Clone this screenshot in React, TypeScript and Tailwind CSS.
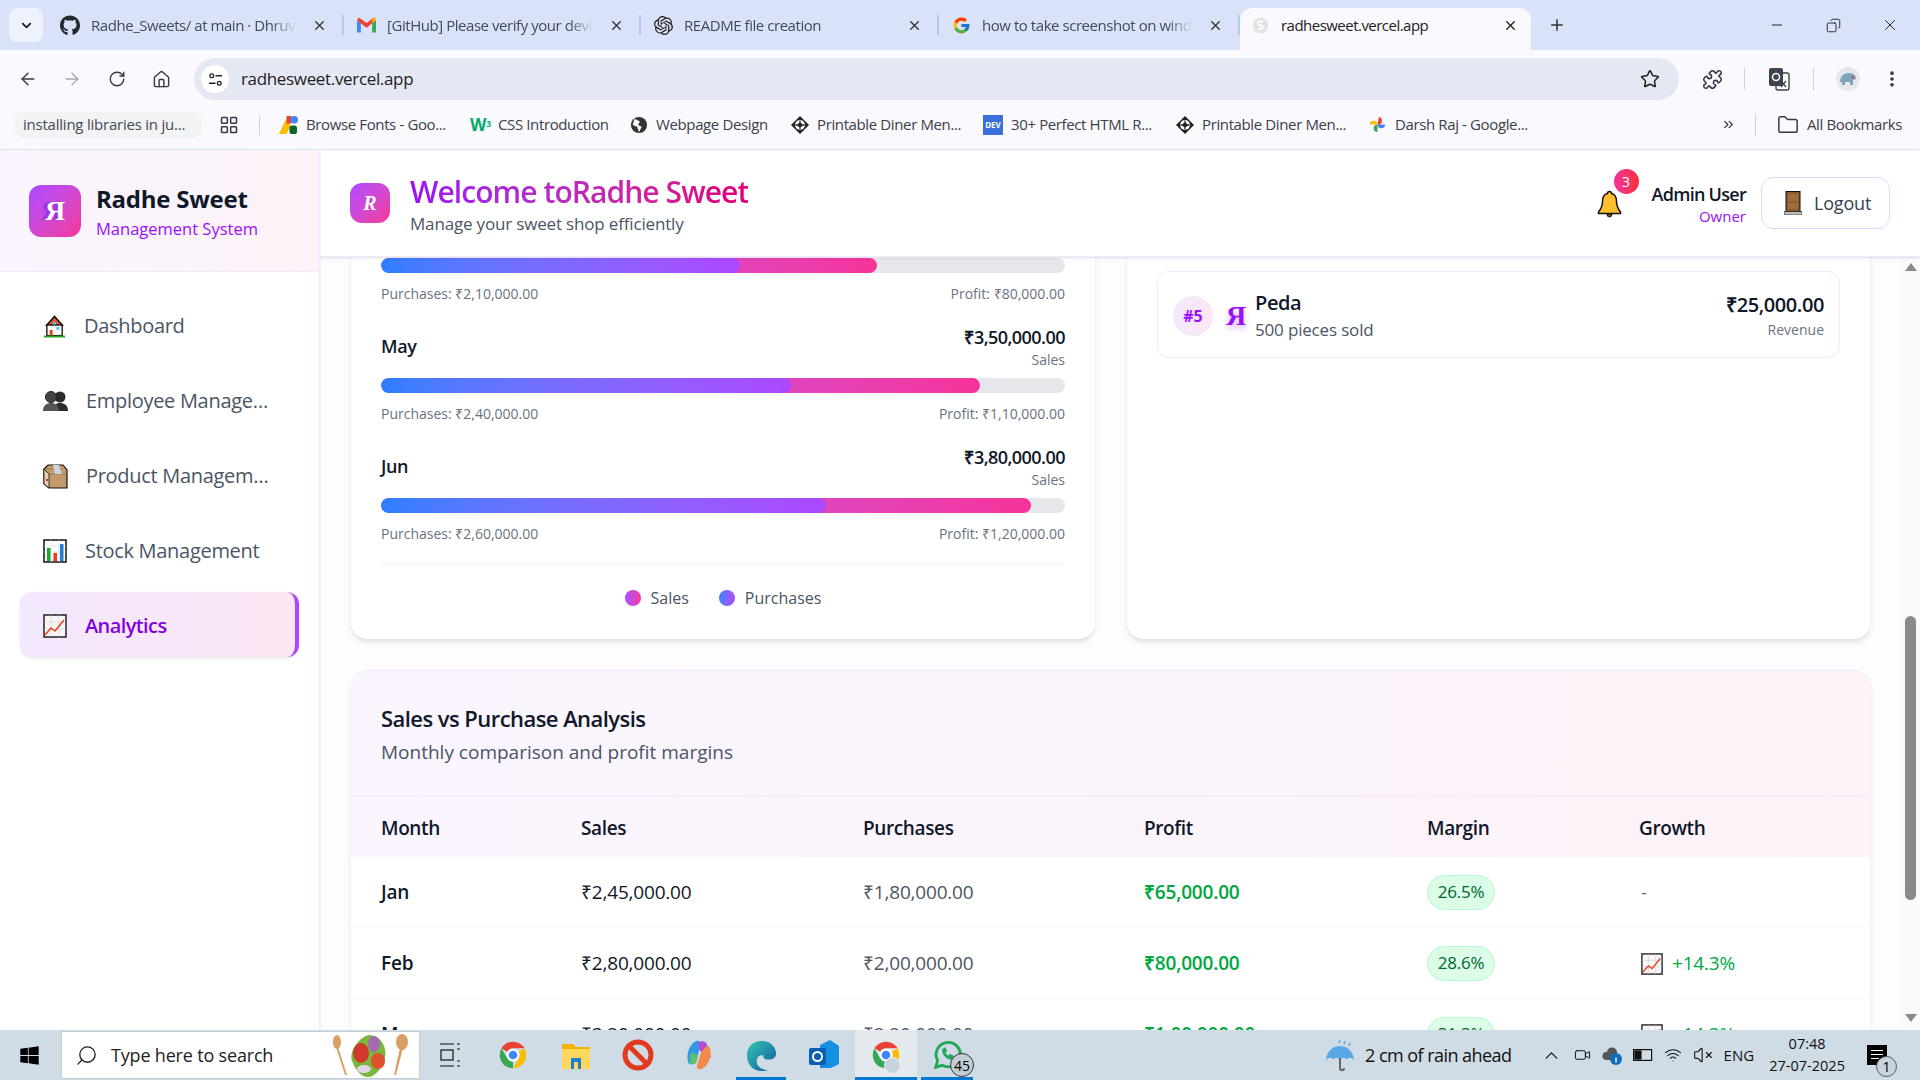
import { ArrowLeft, ArrowRight, RotateCw, House, Star, Puzzle, EllipsisVertical, Folder, LayoutGrid, ChevronDown, ChevronUp, X, Plus, Minus, Copy, Search, ChevronsRight, Video, VolumeX, Wifi } from "lucide-react"
import { FaGithub, FaWindows } from "react-icons/fa"
import { SiOpenai } from "react-icons/si"
import { FcGoogle } from "react-icons/fc"

const HomeEmoji = () => (
  <svg viewBox="0 0 24 24" className="w-[23px] h-[24px] shrink-0">
    <path d="M3 12 12 2l9 10" fill="#e8532b" stroke="#111" strokeWidth="1.6" />
    <rect x="4" y="11" width="16" height="11" fill="#fff" stroke="#111" strokeWidth="1.4" />
    <rect x="7" y="16" width="3" height="6" fill="#e8401c" />
    <rect x="14" y="13" width="3" height="3" fill="#4fc3f7" />
    <rect x="10.5" y="7.5" width="3" height="3" fill="#4fc3f7" />
    <rect x="1" y="22" width="22" height="2" fill="#26a326" />
  </svg>
)

const BustsEmoji = () => (
  <svg viewBox="0 0 25 20" className="w-[25px] h-[20px] shrink-0">
    <circle cx="17" cy="6" r="5.5" fill="#2b2b2b" />
    <path d="M10 20c0-6 3-8 7-8s8 2 8 8z" fill="#2b2b2b" />
    <circle cx="8" cy="6" r="5.5" fill="#444" stroke="#222" />
    <path d="M0 20c0-6 4-8 8-8s8 2 8 8z" fill="#555" />
  </svg>
)

const BoxEmoji = () => (
  <svg viewBox="0 0 25 25" className="w-[25px] h-[25px] shrink-0">
    <path d="M1 5 5 1h15l4 5v18H6l-5-4z" fill="#c39a6b" stroke="#111" strokeWidth="1.2" />
    <path d="M1 5l5 5v14l-5-4z" fill="#e8cfae" stroke="#111" strokeWidth="0.8" />
    <path d="M6 10h18M1 5h18" stroke="#8a6a44" strokeWidth="0.6" />
    <path d="M10 1h6l3 9h-7z" fill="#cbd5de" />
    <rect x="3" y="15" width="2" height="2" fill="#d8263c" />
  </svg>
)

const BarsEmoji = () => (
  <svg viewBox="0 0 24 24" className="w-[24px] h-[24px] shrink-0">
    <rect x="1" y="1" width="22" height="22" fill="#fafafa" stroke="#111" strokeWidth="1.5" />
    <path d="M1 7h22M1 13h22M8 1v22M16 1v22" stroke="#ddd" strokeWidth="0.6" />
    <rect x="4" y="9" width="3.5" height="13" fill="#1fa82e" />
    <rect x="10.5" y="14" width="3.5" height="8" fill="#e83a1f" />
    <rect x="17" y="5" width="3.5" height="17" fill="#1f7fd8" />
  </svg>
)

const ChartUpEmoji = ({ className = "w-[24px] h-[24px]" }: { className?: string }) => (
  <svg viewBox="0 0 24 24" className={className + " shrink-0"}>
    <rect x="1" y="1" width="22" height="22" fill="#f7f7f7" stroke="#222" strokeWidth="1.5" />
    <path d="M1 8h22M1 15h22M8 1v22M16 1v22" stroke="#ccc" strokeWidth="0.6" />
    <path d="M2 21l6-7 4 3 9-11" fill="none" stroke="#e8401c" strokeWidth="1.5" />
  </svg>
)

const BellEmoji = () => (
  <svg viewBox="0 0 25 28" className="w-[25px] h-[28px]">
    <path d="M12.500 1.500c1.500 0 2 1 2 2 4 1 5 4 5 8 0 5 2 8 4 10.500v1.500H1.500V22c2-2.500 4-5.500 4-10.500 0-4 1-7 5-8 0-1 .5-2 2-2z" fill="#fdbf2d" stroke="#111" strokeWidth="1.500" />
    <path d="M10 24a2.500 3 0 0 0 5 0z" fill="#7a5a10" stroke="#111" strokeWidth="1" />
  </svg>
)

const DoorEmoji = () => (
  <svg viewBox="0 0 18 24" className="w-[18px] h-[24px] shrink-0">
    <rect x="2" y="0.500" width="14" height="20" fill="#8a5a32" stroke="#111" />
    <rect x="4" y="3" width="10" height="7" fill="#a06c3e" />
    <rect x="4" y="12" width="10" height="6" fill="#a06c3e" />
    <rect x="0" y="20.500" width="18" height="3.500" fill="#bbb" stroke="#111" strokeWidth="0.600" />
  </svg>
)

const ChromeLogo = ({ className }: { className: string }) => (
  <svg viewBox="0 0 48 48" className={className}>
    <path d="M24 4a20 20 0 0 1 17.320 10H24a10 10 0 0 0-8.660 5L6.680 14A20 20 0 0 1 24 4z" fill="#ea4335" />
    <path d="M41.320 14A20 20 0 0 1 24 44l8.660-15A10 10 0 0 0 32.660 19z" fill="#fbbc04" />
    <path d="M6.680 14l8.660 15A10 10 0 0 0 24 34l-0 10A20 20 0 0 1 6.680 14z" fill="#34a853" />
    <circle cx="24" cy="24" r="8" fill="#4285f4" stroke="#fff" strokeWidth="3" />
  </svg>
)

const GmailIcon = () => (
  <svg viewBox="0 0 20 16" className="w-[19px] h-[16px]">
    <path d="M0 3v13h4V6z" fill="#4285f4" />
    <path d="M20 3v13h-4V6z" fill="#34a853" />
    <path d="M0 3l10 8 10-8-2-3-8 6-8-6z" fill="#ea4335" />
    <path d="M16 3l2-3c1-.3 2 .8 2 3l-4 3z" fill="#fbbc04" />
  </svg>
)

const DinerIcon = () => (
  <svg viewBox="0 0 20 20" className="w-[18px] h-[18px] shrink-0">
    <path d="M10 0l10 10-10 10L0 10z" fill="#222" />
    <circle cx="10" cy="10" r="5.500" fill="#fff" />
    <path d="M10 5v10M5 10h10" stroke="#222" strokeWidth="1.500" />
    <circle cx="10" cy="10" r="2.500" fill="#222" />
  </svg>
)

const PinwheelIcon = () => (
  <svg viewBox="0 0 20 20" className="w-[19px] h-[19px] shrink-0">
    <path d="M10 10V2a4 4 0 0 1 0 8z" fill="#ea4335" transform="rotate(10 10 10)" />
    <path d="M10 10h8a4 4 0 0 1-8 0z" fill="#4285f4" />
    <path d="M10 10v8a4 4 0 0 1 0-8z" fill="#34a853" />
    <path d="M10 10H2a4 4 0 0 1 8 0z" fill="#fbbc04" />
  </svg>
)

const FontsIcon = () => (
  <svg viewBox="0 0 20 20" className="w-[19px] h-[19px] shrink-0">
    <path d="M0 20 8 3l4 8-4 9z" fill="#fbbc04" />
    <rect x="8" y="1" width="5" height="8" fill="#ea4335" />
    <circle cx="16" cy="5" r="4" fill="#4285f4" />
    <rect x="11" y="11" width="8" height="9" rx="3" fill="#0d652d" />
  </svg>
)

const bookmarks = [
  { icon: <FontsIcon />, label: "Browse Fonts - Goo...", w: "w-[191px]" },
  { icon: <span className="w-[20px] text-[17px] font-bold text-[#04aa6d] leading-none shrink-0">W<sup className="text-[8px]">3</sup></span>, label: "CSS Introduction", w: "w-[160px]" },
  { icon: <svg viewBox="0 0 20 20" className="w-[18px] h-[18px] shrink-0"><circle cx="10" cy="10" r="9" fill="#333" /><path d="M5 3l6 3-2 4 4 2-3 6-2-6-5-2z" fill="#f9f9fe" /></svg>, label: "Webpage Design", w: "w-[161px]" },
  { icon: <DinerIcon />, label: "Printable Diner Men...", w: "w-[192px]" },
  { icon: <span className="w-[20px] h-[20px] bg-[#3b6fdc] text-white text-[8px] font-bold flex items-center justify-center shrink-0">DEV</span>, label: "30+ Perfect HTML R...", w: "w-[193px]" },
  { icon: <DinerIcon />, label: "Printable Diner Men...", w: "w-[192px]" },
  { icon: <PinwheelIcon />, label: "Darsh Raj - Google...", w: "w-[190px]" },
]

const tabs = [
  { icon: <FaGithub className="w-[21px] h-[21px] text-[#24292f]" />, label: "Radhe_Sweets/ at main · Dhruvi", w: "w-[296px]" },
  { icon: <GmailIcon />, label: "[GitHub] Please verify your device", w: "w-[297px]" },
  { icon: <SiOpenai className="w-[19px] h-[19px] text-[#222]" />, label: "README file creation", w: "w-[298px]" },
  { icon: <FcGoogle className="w-[19px] h-[19px]" />, label: "how to take screenshot on windows", w: "w-[301px]" },
]

function TabStrip() {
  return (
    <div className="h-[50px] bg-[#d9e2f9] flex items-end shrink-0">
      <div className="self-start mt-[8px] ml-[9px] mr-[5px] w-[34px] h-[34px] bg-[#eef2fd] rounded-lg flex items-center justify-center">
        <ChevronDown className="w-[15px] h-[15px] text-[#222]" strokeWidth={3} />
      </div>
      {tabs.map((tab) => (
        <div key={tab.label} className={tab.w + " h-[50px] flex items-center relative pl-[12px] pr-[48px] gap-[11px] shrink-0"}>
          <span className="shrink-0 w-[20px] flex justify-center">{tab.icon}</span>
          <span className="flex-1 min-w-0 text-[15px] tracking-[-0.03em] text-[#444a55] whitespace-nowrap overflow-hidden [mask-image:linear-gradient(to_right,black_88%,transparent)]">{tab.label}</span>
          <X className="absolute right-[17px] top-[18px] w-[15px] h-[15px] text-[#333]" strokeWidth={2.2} />
          <span className="absolute right-0 top-[15px] h-[20px] w-[2px] bg-[#b4c7ee]"></span>
        </div>
      ))}
      <div className="w-[291px] h-[42px] bg-[#f9f9fe] rounded-t-xl flex items-center relative pl-[12px] pb-[8px] gap-[12px] shrink-0">
        <svg viewBox="0 0 20 20" className="w-[17px] h-[17px] shrink-0">
          <circle cx="10" cy="10" r="9" fill="#e2e2e4" />
          <path d="M13 6c-2-2-6-1-6 1 0 3 6 2 6 5 0 2-4 3-6 1" fill="none" stroke="#fff" strokeWidth="2" />
        </svg>
        <span className="text-[15px] tracking-[-0.035em] text-[#222]">radhesweet.vercel.app</span>
        <X className="absolute right-[13px] top-[10px] w-[15px] h-[15px] text-[#222]" strokeWidth={2.2} />
      </div>
      <div className="h-[50px] flex items-center ml-[17px] flex-1">
        <Plus className="w-[18px] h-[18px] text-[#333]" strokeWidth={2} />
        <Minus className="ml-[203px] w-[16px] h-[16px] text-[#222]" strokeWidth={1.5} />
        <Copy className="ml-[41px] w-[15px] h-[15px] text-[#222] -scale-x-100" strokeWidth={1.5} />
        <X className="ml-[40px] w-[18px] h-[18px] text-[#222]" strokeWidth={1.3} />
      </div>
    </div>
  )
}

function Toolbar() {
  return (
    <div className="h-[58px] bg-[#f9f9fe] flex items-center shrink-0">
      <ArrowLeft className="ml-[18px] w-[20px] h-[20px] text-[#333a45]" strokeWidth={1.7} />
      <ArrowRight className="ml-[24px] w-[20px] h-[20px] text-[#a5a9b2]" strokeWidth={1.7} />
      <RotateCw className="ml-[26px] w-[18px] h-[18px] text-[#333a45]" strokeWidth={1.8} />
      <House className="ml-[26px] w-[19px] h-[19px] text-[#333a45]" strokeWidth={1.8} />
      <div className="ml-[23px] w-[1485px] h-[42px] rounded-full bg-[#e4e8f3] flex items-center pl-[7px] pr-[19px]">
        <span className="w-[28px] h-[28px] rounded-full bg-white flex items-center justify-center">
          <svg viewBox="0 0 16 16" className="w-[15px] h-[15px]" fill="none" stroke="#222" strokeWidth="1.4">
            <circle cx="4" cy="4" r="2" /><path d="M8 4h7M1 12h7" /><circle cx="12" cy="12" r="2" />
          </svg>
        </span>
        <span className="ml-[12px] text-[17px] tracking-[-0.02em] text-[#1f2024] flex-1">radhesweet.vercel.app</span>
        <Star className="w-[20px] h-[20px] text-[#222]" strokeWidth={1.8} />
      </div>
      <Puzzle className="ml-[23px] w-[21px] h-[21px] text-[#333a45]" strokeWidth={1.8} />
      <span className="ml-[21px] w-[1px] h-[22px] bg-[#c6d5ef]"></span>
      <svg viewBox="0 0 22 24" className="ml-[23px] w-[22px] h-[24px]">
        <rect x="8" y="6" width="13" height="17" rx="2" fill="#fff" stroke="#3c4450" strokeWidth="1.400" />
        <rect x="1" y="1" width="14" height="18" rx="2" fill="#3c4450" />
        <circle cx="8" cy="10" r="3.500" fill="none" stroke="#fff" strokeWidth="1.500" />
        <path d="M13 14l5 6M18 14l-5 6" stroke="#3c4450" strokeWidth="1.300" />
      </svg>
      <span className="ml-[23px] w-[1px] h-[22px] bg-[#c6d5ef]"></span>
      <svg viewBox="0 0 24 24" className="ml-[22px] w-[24px] h-[24px]">
        <circle cx="12" cy="12" r="12" fill="#e6e8ec" />
        <path d="M4 15c0-6 4-9 9-9 5 0 7 3 7 6l-3 1v5h-3v-3H9v3H6v-3z" fill="#7fa6b8" />
        <circle cx="17" cy="10" r="1.500" fill="#c0527a" />
      </svg>
      <EllipsisVertical className="ml-[22px] w-[20px] h-[20px] text-[#333a45]" strokeWidth={2.4} />
    </div>
  )
}

function BookmarksBar() {
  return (
    <div className="h-[42px] bg-[#f9f9fe] flex items-center shrink-0 border-b border-[#e3e5f0] pb-[8px]">
      <span className="ml-[15px] w-[187px] h-[26px] rounded-lg bg-[#f1f3f4] text-[15px] tracking-[-0.015em] text-[#444a55] pl-[8px] flex items-center whitespace-nowrap">installing libraries in ju...</span>
      <LayoutGrid className="ml-[17px] w-[20px] h-[20px] text-[#333a45]" strokeWidth={1.8} />
      <span className="ml-[20px] mr-[19px] w-[1px] h-[20px] bg-[#c6d5ef]"></span>
      {bookmarks.map((b, i) => (
        <div key={i} className={b.w + " flex items-center gap-[8px] shrink-0"}>
          {b.icon}
          <span className="text-[15px] tracking-[-0.025em] text-[#3c4048] whitespace-nowrap">{b.label}</span>
        </div>
      ))}
      <ChevronsRight className="ml-[163px] w-[15px] h-[15px] text-[#333a45]" strokeWidth={2} />
      <span className="ml-[19px] w-[1px] h-[22px] bg-[#c6d5ef]"></span>
      <Folder className="ml-[21px] w-[22px] h-[22px] text-[#333a45]" strokeWidth={1.6} />
      <span className="ml-[8px] text-[15px] tracking-[-0.025em] text-[#3c4048] whitespace-nowrap">All Bookmarks</span>
    </div>
  )
}

const navItems = [
  { icon: <HomeEmoji />, label: "Dashboard" },
  { icon: <BustsEmoji />, label: "Employee Management" },
  { icon: <BoxEmoji />, label: "Product Management" },
  { icon: <BarsEmoji />, label: "Stock Management" },
]

function Sidebar() {
  return (
    <div className="w-[320px] shrink-0 bg-white border-r border-[#f3e8ff] shadow-sm flex flex-col z-20">
      <div className="h-[122px] bg-gradient-to-r from-purple-50 to-pink-50 border-b border-[#f3e8ff] flex items-center pl-[29px] gap-[15px]">
        <div className="w-[52px] h-[52px] rounded-xl bg-gradient-to-br from-purple-500 to-pink-500 flex items-center justify-center text-white text-[28px] font-bold font-['Liberation_Serif',serif] [text-shadow:-4px_0_2px_#9333ea]">Я</div>
        <div className="pt-[4px]">
          <div className="text-[24px] leading-[30px] font-bold tracking-[-0.01em] text-gray-900">Radhe Sweet</div>
          <div className="text-[16.500px] leading-[24px] text-purple-600 mt-[3px]">Management System</div>
        </div>
      </div>
      <nav className="px-[20px] pt-[22px] flex flex-col gap-[11px]">
        {navItems.map((item) => (
          <div key={item.label} className="h-[64px] pl-[23px] flex items-center gap-[18px] text-[20px] tracking-[-0.015em] font-medium text-gray-600">
            {item.icon}
            <span className="w-[186px] truncate">{item.label}</span>
          </div>
        ))}
        <div className="h-[65px] -mt-[2px] pt-[2px] w-[279px] pl-[23px] flex items-center gap-[18px] text-[20px] tracking-[-0.03em] font-semibold text-purple-700 rounded-xl bg-gradient-to-r from-purple-100 to-pink-100 border-r-4 border-purple-500 shadow-sm">
          <ChartUpEmoji />
          <span>Analytics</span>
        </div>
      </nav>
    </div>
  )
}

function TopHeader() {
  return (
    <div className="h-[107px] shrink-0 bg-white border-b border-[#f3e8ff] shadow-sm flex items-center pl-[30px] z-10">
      <div className="w-[40px] h-[40px] rounded-xl bg-gradient-to-br from-purple-500 to-pink-500 flex items-center justify-center text-white text-[20px] font-bold italic font-['Liberation_Serif',serif]">R</div>
      <div className="ml-[20px] pt-[5px]">
        <div className="text-[30px] leading-[36px] font-semibold tracking-[-0.031em] bg-gradient-to-r from-purple-600 to-pink-600 bg-clip-text text-transparent w-fit">Welcome toRadhe Sweet</div>
        <div className="text-[17px] leading-[26px] tracking-[-0.01em] text-gray-600 mt-[1px]">Manage your sweet shop efficiently</div>
      </div>
      <div className="ml-auto flex items-center pr-[30px]">
        <div className="relative mr-[30px] mt-[2px]">
          <BellEmoji />
          <span className="absolute -top-[21px] left-[17px] w-[25px] h-[25px] rounded-full bg-gradient-to-r from-pink-500 to-red-500 text-white text-[14px] flex items-center justify-center">3</span>
        </div>
        <div className="text-right mr-[15px]">
          <div className="text-[18px] leading-[26px] font-semibold tracking-[-0.04em] text-gray-900 mt-[1px]">Admin User</div>
          <div className="text-[15px] leading-[20px] text-purple-600 -mt-[1px]">Owner</div>
        </div>
        <div className="w-[129px] h-[52px] rounded-xl border border-purple-200 flex items-center pl-[22px] gap-[12px] text-[18px] tracking-[-0.01em] text-gray-700">
          <DoorEmoji />
          Logout
        </div>
      </div>
    </div>
  )
}

const months = [
  { name: "Apr", sales: 290000, purchases: 210000, sold: "₹2,90,000.00", bought: "₹2,10,000.00", profit: "₹80,000.00" },
  { name: "May", sales: 350000, purchases: 240000, sold: "₹3,50,000.00", bought: "₹2,40,000.00", profit: "₹1,10,000.00" },
  { name: "Jun", sales: 380000, purchases: 260000, sold: "₹3,80,000.00", bought: "₹2,60,000.00", profit: "₹1,20,000.00" },
]

function MonthRow({ m }: { m: (typeof months)[number] }) {
  return (
    <div>
      <div className="h-[53px] pb-[10px] flex items-center justify-between">
        <span className="text-[18px] font-semibold tracking-[-0.02em] text-gray-900">{m.name}</span>
        <div className="text-right -mt-[1px]">
          <div className="text-[18px] leading-[26px] font-semibold tracking-[-0.03em] text-gray-900">{m.sold}</div>
          <div className="text-[14px] leading-[19px] text-gray-500">Sales</div>
        </div>
      </div>
      <div className="h-[15px] rounded-full bg-gray-200 relative overflow-hidden">
        <div className="absolute inset-y-0 left-0 rounded-full bg-gradient-to-r from-purple-500 to-pink-500" style={{ width: `${(m.sales / 400000) * 100}%` }}></div>
        <div className="absolute inset-y-0 left-0 rounded-full bg-gradient-to-r from-blue-500 to-purple-500" style={{ width: `${(m.purchases / 400000) * 100}%` }}></div>
      </div>
      <div className="mt-[9px] mb-[1px] h-[22px] flex justify-between items-center text-[14px] text-gray-500">
        <span>Purchases: {m.bought}</span>
        <span>Profit: {m.profit}</span>
      </div>
    </div>
  )
}

const tableRows = [
  { month: "Jan", sales: "₹2,45,000.00", purchases: "₹1,80,000.00", profit: "₹65,000.00", margin: "26.5%", growth: "" },
  { month: "Feb", sales: "₹2,80,000.00", purchases: "₹2,00,000.00", profit: "₹80,000.00", margin: "28.6%", growth: "+14.3%" },
  { month: "Mar", sales: "₹3,20,000.00", purchases: "₹2,20,000.00", profit: "₹1,00,000.00", margin: "31.3%", growth: "+14.3%" },
]

const gridCols = "grid grid-cols-[200px_282px_281px_283px_212px_261px]"

function AnalysisTable() {
  return (
    <div className="mt-[31px] bg-white rounded-t-2xl shadow-md border-t border-[#f3e8ff] overflow-hidden">
      <div className="bg-gradient-to-r from-purple-50 to-pink-50">
        <div className="h-[126px] pl-[30px] pt-[31px] border-b border-[#f3e8ff]">
          <div className="text-[22px] leading-[32px] font-semibold tracking-[-0.025em] text-gray-900">Sales vs Purchase Analysis</div>
          <div className="text-[19px] leading-[28px] text-gray-600 mt-[4px]">Monthly comparison and profit margins</div>
        </div>
        <div className={gridCols + " h-[60px] items-center text-[19px] font-semibold tracking-[-0.02em] text-gray-900"}>
          {["Month", "Sales", "Purchases", "Profit", "Margin", "Growth"].map((h) => (
            <div key={h} className="pl-[30px] pt-[2px]">{h}</div>
          ))}
        </div>
      </div>
      {tableRows.map((r) => (
        <div key={r.month} className={gridCols + " h-[71px] items-center text-[19px] tracking-[-0.01em] border-b border-[#faf5ff]"}>
          <div className="pl-[30px] pt-[1px] font-semibold text-gray-900">{r.month}</div>
          <div className="pl-[30px] pt-[1px] text-gray-900">{r.sales}</div>
          <div className="pl-[30px] pt-[1px] text-gray-600">{r.purchases}</div>
          <div className="pl-[30px] pt-[1px] font-semibold text-green-600">{r.profit}</div>
          <div className="pl-[30px]">
            <span className="inline-flex w-[68px] h-[35px] items-center justify-center rounded-full bg-green-100 border border-green-200 text-green-800 text-[17px]">{r.margin}</span>
          </div>
          <div className="pl-[32px] pt-[1px]">
            {r.growth ? (
              <span className="flex items-center gap-[9px] text-green-600">
                <ChartUpEmoji className="w-[22px] h-[22px]" />
                {r.growth}
              </span>
            ) : (
              <span className="text-gray-500">-</span>
            )}
          </div>
        </div>
      ))}
    </div>
  )
}

function Content() {
  return (
    <div className="flex-1 flex overflow-hidden bg-[#fdfcff]">
      <div className="flex-1 overflow-hidden pl-[31px] pr-[31px]">
        <div className="-mt-[52px] grid grid-cols-[744px_743px] gap-[32px]">
          <div className="bg-white rounded-b-2xl shadow-md px-[30px] h-[434px]">
            <div className="flex flex-col gap-[20px]">
              {months.map((m) => <MonthRow key={m.name} m={m} />)}
            </div>
            <div className="mt-[18px] border-t border-[#f3f0f7] pt-[22px] flex justify-center items-center gap-[30px] text-[16px] text-gray-600">
              <span className="flex items-center gap-[10px]"><i className="w-[16px] h-[16px] rounded-full bg-gradient-to-r from-purple-500 to-pink-500"></i>Sales</span>
              <span className="flex items-center gap-[10px]"><i className="w-[16px] h-[16px] rounded-full bg-gradient-to-r from-blue-500 to-purple-500"></i>Purchases</span>
            </div>
          </div>
          <div className="bg-white rounded-b-2xl shadow-md px-[30px] pt-[66px] h-[434px]">
            <div className="h-[87px] pt-[2px] border border-[#f3e8ff] rounded-xl flex items-center pl-[15px] pr-[15px]">
              <span className="w-[40px] h-[40px] rounded-full bg-gradient-to-r from-purple-100 to-pink-100 text-purple-600 font-bold text-[16px] flex items-center justify-center">#5</span>
              <span className="ml-[13px] w-[29px] text-[28px] font-bold font-['Liberation_Serif',serif] text-purple-600 [text-shadow:0_4px_6px_#d8b4fe]">Я</span>
              <div>
                <div className="text-[20px] leading-[28px] font-semibold tracking-[-0.02em] text-gray-900">Peda</div>
                <div className="text-[17px] leading-[26px] tracking-[-0.01em] text-gray-600">500 pieces sold</div>
              </div>
              <div className="ml-auto text-right">
                <div className="text-[20px] leading-[28px] font-semibold tracking-[-0.02em] text-gray-900">₹25,000.00</div>
                <div className="text-[14px] leading-[22px] text-gray-500">Revenue</div>
              </div>
            </div>
          </div>
        </div>
        <AnalysisTable />
      </div>
      <div className="w-[19px] shrink-0 bg-[#fafafa] flex flex-col items-center">
        <span className="mt-[6px] w-0 h-0 border-x-[6px] border-x-transparent border-b-[8px] border-b-[#8a8a8a]"></span>
        <span className="mt-[345px] w-[11px] h-[284px] rounded-full bg-[#8a8a8a]"></span>
        <span className="mt-[114px] w-0 h-0 border-x-[6px] border-x-transparent border-t-[8px] border-t-[#8a8a8a]"></span>
      </div>
    </div>
  )
}

const Underline = () => <span className="absolute bottom-0 left-0 right-0 h-[3px] bg-[#0078d4]"></span>

function Salad() {
  return (
    <svg viewBox="0 0 78 46" className="absolute left-[269px] top-[1px] w-[78px] h-[46px]">
      <ellipse cx="6" cy="9" rx="4" ry="7" fill="#d9a066" />
      <path d="M5 14h2l9 28h-2z" fill="#d9a066" />
      <ellipse cx="71" cy="9" rx="6" ry="8" fill="#d9a066" />
      <path d="M69 15h3l-7 27h-2z" fill="#d9a066" />
      <path d="M22 30c-6-10 6-26 16-28 12 0 20 14 15 26-4 10-10 16-16 16-6 0-12-6-15-14z" fill="#79b83e" />
      <ellipse cx="30" cy="20" rx="8" ry="10" fill="#cf3a2d" />
      <ellipse cx="47" cy="28" rx="7" ry="8" fill="#df5230" />
      <ellipse cx="43" cy="11" rx="6" ry="8" fill="#a56bb0" />
      <ellipse cx="33" cy="36" rx="7" ry="4" fill="#e3d6e8" />
    </svg>
  )
}

const RainUmbrella = () => (
  <svg viewBox="0 0 30 34" className="ml-[352px] w-[30px] h-[34px]">
    <path d="M1 22C2 12 9 8 15 8s13 4 14 14c-3-3-6-3-7 0-2-3-5-3-7 0-2-3-5-3-7 0-1-3-4-3-7 0z" fill="#56a9e6" />
    <path d="M15 20v10c0 3 4 3 4 0" fill="none" stroke="#666" strokeWidth="2" />
    <path d="M14 5l1-3M19 6l1-3M24 8l1-3" stroke="#56a9e6" strokeWidth="1.500" />
  </svg>
)

function Taskbar() {
  return (
    <div className="h-[50px] shrink-0 bg-[#cfdce6] flex items-center relative z-30">
      <FaWindows className="ml-[19px] w-[21px] h-[21px] text-black" />
      <div className="ml-[21px] w-[359px] h-[48px] bg-white border border-[#c5ced6] flex items-center relative">
        <Search className="ml-[13px] w-[23px] h-[23px] text-[#222] -scale-x-100" strokeWidth={1.4} />
        <span className="ml-[13px] text-[18px] tracking-[-0.01em] text-[#222]">Type here to search</span>
        <Salad />
      </div>
      <svg viewBox="0 0 20 26" className="ml-[20px] w-[20px] h-[26px]" fill="none" stroke="#111" strokeWidth="1.200">
        <path d="M0 2h14M0 24h14M17 2h3M17 24h3M17 7h3M17 19h3" /><rect x="1" y="8" width="12" height="10" />
      </svg>
      <ChromeLogo className="ml-[37px] w-[32px] h-[32px]" />
      <svg viewBox="0 0 30 30" className="ml-[32px] w-[30px] h-[30px]">
        <path d="M1 4h11l3 3h14v6H1z" fill="#f4b400" />
        <path d="M1 9h28v20H1z" fill="#ffd75e" />
        <path d="M10 29V18h10v11h-3v-7h-4v7z" fill="#1c7fd4" />
      </svg>
      <svg viewBox="0 0 32 32" className="ml-[31px] w-[32px] h-[32px]" fill="none" stroke="#e23a1e" strokeWidth="5">
        <circle cx="16" cy="16" r="13" /><path d="M7 7l18 18" />
      </svg>
      <svg viewBox="0 0 30 34" className="ml-[31px] w-[28px] h-[32px]">
        <path d="M4 26C0 16 6 4 12 2c4-1 5 2 4 5l-3 14c-1 5-6 8-9 5z" fill="#2f9be8" />
        <path d="M14 4c4-3 9-2 10 3l4 13-9-5-4-4z" fill="#b04fd6" />
        <path d="M26 8c4 8 0 20-8 24-3 1-6 0-5-4l3-10c1-5 8-13 10-10z" fill="#f3894b" />
        <path d="M6 14l7 3-1 9-7 1z" fill="#5ec16a" />
      </svg>
      <div className="ml-[23px] w-[50px] h-[50px] relative flex items-center justify-center">
        <svg viewBox="0 0 32 32" className="w-[31px] h-[31px]">
          <defs><linearGradient id="edgeFill" x1="0" y1="0" x2="1" y2="1"><stop offset="0" stopColor="#36c7b0" /><stop offset="1" stopColor="#0c59a4" /></linearGradient></defs>
          <path d="M16 1c9 0 15 6 15 13 0 5-5 7-9 6-3 0-5-2-4-4-3-1-7 1-7 6 0 5 5 9 12 9-3 1-5 1-7 1C7 32 1 25 1 16 1 7 7 1 16 1z" fill="url(#edgeFill)" />
        </svg>
        <Underline />
      </div>
      <svg viewBox="0 0 32 32" className="ml-[22px] w-[32px] h-[32px]">
        <path d="M12 6l10-5 9 6v18l-8 4H12z" fill="#1490df" />
        <rect x="1" y="9" width="17" height="17" rx="2" fill="#0a5fb0" />
        <circle cx="9.500" cy="17.500" r="4.500" fill="none" stroke="#fff" strokeWidth="2" />
      </svg>
      <div className="ml-[15px] w-[62px] h-[50px] relative bg-[#e4e9ee] flex items-center justify-center">
        <ChromeLogo className="w-[32px] h-[32px]" />
        <span className="absolute left-[29px] top-[27px] w-[17px] h-[17px] rounded-full bg-[#c7d3dc] border border-[#eef2f5]"></span>
        <Underline />
      </div>
      <div className="ml-[4px] w-[52px] h-[50px] relative flex items-center pl-[11px]">
        <svg viewBox="0 0 32 32" className="w-[30px] h-[30px]" fill="none" stroke="#1fa855" strokeWidth="3">
          <path d="M4 29l2-7a13 13 0 1 1 5 5z" /><path d="M11 10c0 6 4 10 10 11l2-4-4-2-1 2c-2-1-3-2-4-4l2-1-2-4z" fill="#1fa855" strokeWidth="0.500" />
        </svg>
        <span className="absolute left-[29px] top-[23px] w-[24px] h-[24px] rounded-full bg-[#c3cdd5] border border-[#333] text-[14px] text-black flex items-center justify-center">45</span>
        <Underline />
      </div>
      <RainUmbrella />
      <span className="ml-[10px] text-[18px] tracking-[-0.03em] text-[#111] whitespace-nowrap">2 cm of rain ahead</span>
      <ChevronUp className="ml-[29px] w-[21px] h-[21px] text-[#111]" strokeWidth={1.4} />
      <Video className="ml-[12px] w-[17px] h-[20px] text-[#111]" strokeWidth={1.4} />
      <svg viewBox="0 0 20 20" className="ml-[11px] w-[20px] h-[20px]">
        <path d="M4 15a4 4 0 0 1 1-8 5 5 0 0 1 10 1v7z" fill="#555" />
        <circle cx="14" cy="14" r="6" fill="#0f6cbd" />
        <rect x="13.300" y="12.500" width="1.400" height="5" fill="#fff" />
      </svg>
      <svg viewBox="0 0 20 12" className="ml-[11px] w-[20px] h-[12px]" fill="none" stroke="#111" strokeWidth="1.200">
        <rect x="0.600" y="0.600" width="18" height="10.800" /><rect x="2" y="2" width="6" height="8" fill="#111" />
      </svg>
      <Wifi className="ml-[11px] w-[18px] h-[18px] text-[#111]" strokeWidth={1.4} />
      <VolumeX className="ml-[11px] w-[20px] h-[20px] text-[#111]" strokeWidth={1.3} />
      <span className="ml-[11px] text-[15px] text-[#111]">ENG</span>
      <div className="ml-[11px] w-[84px] text-center text-[14.500px] leading-[22px] text-[#111]">
        <div>07:48</div>
        <div className="whitespace-nowrap">27-07-2025</div>
      </div>
      <div className="ml-[18px] relative w-[20px] h-[20px] bg-black">
        <span className="absolute left-[4px] top-[5px] w-[12px] h-[1px] bg-white"></span>
        <span className="absolute left-[4px] top-[9px] w-[12px] h-[1px] bg-white"></span>
        <span className="absolute left-[4px] top-[13px] w-[8px] h-[1px] bg-white"></span>
        <span className="absolute left-[9px] top-[11px] w-[21px] h-[21px] rounded-full bg-[#c8d3dc] border border-[#555] text-[14px] text-black flex items-center justify-center">1</span>
      </div>
    </div>
  )
}

export default function App() {
  return (
    <div className="w-[1920px] h-[1080px] overflow-hidden flex flex-col bg-white font-['Open_Sans',sans-serif]">
      <TabStrip />
      <Toolbar />
      <BookmarksBar />
      <div className="flex-1 flex min-h-0">
        <Sidebar />
        <div className="flex-1 flex flex-col min-w-0">
          <TopHeader />
          <Content />
        </div>
      </div>
      <Taskbar />
    </div>
  )
}
